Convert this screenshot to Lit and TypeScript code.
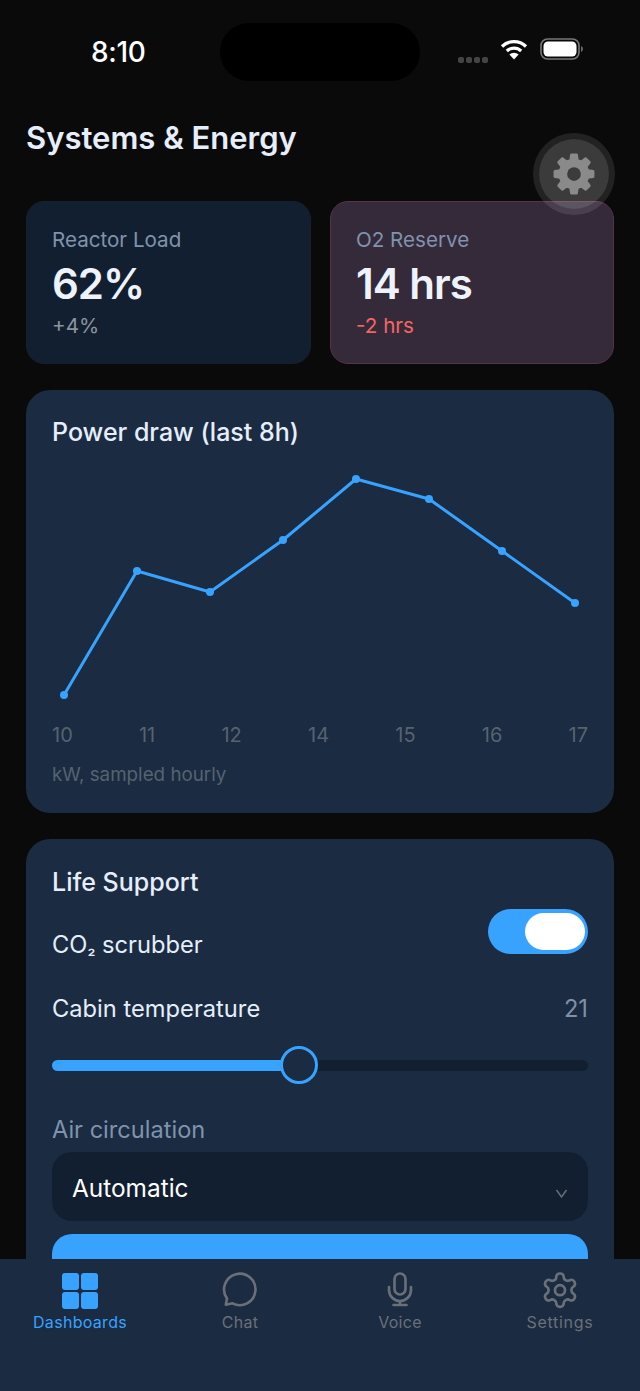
import { LitElement, html, css, svg } from "lit";
import { customElement } from "lit/decorators.js";

const POINTS: [number, number][] = [
  [12, 231], [85, 107], [158, 128], [231, 76], [304, 15], [377, 35], [450, 87], [523, 139],
];
const HOURS = ["10", "11", "12", "14", "15", "16", "17"];

function filledGear(): string {
  // eight rounded teeth around a centre of 24,24
  const teeth = 8;
  const outer = 21;
  const inner = 15.5;
  let d = "";
  for (let i = 0; i < teeth; i++) {
    const a = (i * 2 * Math.PI) / teeth - Math.PI / 2;
    const step = (2 * Math.PI) / teeth;
    const pts = [
      [inner, a - step * 0.3],
      [outer, a - step * 0.17],
      [outer, a + step * 0.17],
      [inner, a + step * 0.3],
    ];
    for (const [r, t] of pts) {
      const x = 24 + r * Math.cos(t);
      const y = 24 + r * Math.sin(t);
      d += `${d ? "L" : "M"}${x.toFixed(2)} ${y.toFixed(2)}`;
    }
  }
  return d + "Z";
}

@customElement("app-root")
export class AppRoot extends LitElement {
  static styles = css`
    :host {
      display: block;
      font-family: Inter, "Noto Sans", sans-serif;
    }
    * { box-sizing: border-box; }
    .screen {
      position: relative;
      width: 640px;
      height: 1391px;
      overflow: hidden;
      background: #0a0a0a;
      color: #e6eefb;
    }
    .status {
      height: 120px;
      padding: 23px 57px 0 91px;
      display: flex;
      align-items: flex-start;
    }
    .time {
      width: 129px;
      font-size: 28px;
      line-height: 58px;
      font-weight: 500;
      letter-spacing: -0.3px;
      color: #fff;
    }
    .island {
      width: 200px;
      height: 58px;
      border-radius: 29px;
      background: #000;
    }
    .status-icons {
      flex: 1;
      height: 58px;
      display: flex;
      justify-content: flex-end;
      align-items: center;
      gap: 12px;
    }
    .dots { display: flex; gap: 2px; margin-top: 15px; }
    .dots i { width: 6px; height: 6px; border-radius: 2px; background: #444; }
    .battery { display: block; }
    main { padding: 0 26px; }
    h1 {
      margin: 0 0 45px;
      font-size: 31px;
      line-height: 36px;
      font-weight: 600;
    }
    .stats {
      display: grid;
      grid-template-columns: 285px 284px;
      justify-content: space-between;
      margin-bottom: 26px;
    }
    .stat {
      height: 163px;
      padding: 25px;
      border-radius: 18px;
      background: #121f30;
      border: 1px solid #15202e;
    }
    .stat.warn { background: #352a3a; border-color: #5a3342; }
    .stat-label { font-size: 20.6px; line-height: 26px; color: #7f93ad; }
    .stat-value { margin-top: 6px; font-size: 42px; line-height: 50px; font-weight: 600; letter-spacing: -1px; color: #eef3fb; }
    .stat-delta { margin-top: 5px; font-size: 20.6px; line-height: 24px; color: #8d939b; }
    .warn .stat-delta { color: #f56565; }
    .card {
      background: #1a2b42;
      border-radius: 24px;
      padding: 26px;
    }
    .chart-card { height: 423px; margin-bottom: 26px; }
    h2 { margin: 0; font-size: 25px; line-height: 32px; font-weight: 500; color: #e6eefb; }
    .plot { display: block; margin-top: 16px; width: 536px; height: 250px; }
    .hours {
      display: flex;
      justify-content: space-between;
      margin-top: 7px;
      font-size: 20px;
      line-height: 28px;
      color: #56636f;
    }
    .caption { margin-top: 13px; font-size: 18.8px; line-height: 26px; color: #56636f; }
    .life { height: 560px; padding-top: 27px; }
    .row { display: flex; justify-content: space-between; align-items: center; }
    .scrub { height: 55px; margin-top: 9px; font-size: 23.7px; line-height: 30px; color: #e6eefb; align-items: flex-end; }
    .scrub .sub { font-size: 18px; }
    .toggle {
      align-self: flex-start;
      margin-top: 2px;
      width: 100px;
      height: 45px;
      border-radius: 23px;
      background: #38a3ff;
      padding: 4px 3px;
      display: flex;
      justify-content: flex-end;
    }
    .knob { width: 60px; height: 37px; border-radius: 19px; background: #fff; }
    .cabin { margin-top: 31px; font-size: 23.7px; line-height: 32px; color: #e6eefb; }
    .cabin b { font-weight: 400; color: #7f90a8; }
    .slider {
      position: relative;
      height: 11px;
      margin-top: 35px;
      border-radius: 6px;
      background: #121f30;
    }
    .fill { height: 11px; border-radius: 6px; background: #38a3ff; }
    .thumb {
      position: absolute;
      top: -14px;
      width: 38px;
      height: 38px;
      margin-left: -19px;
      border-radius: 50%;
      background: #1a2b42;
      border: 3.5px solid #38a3ff;
    }
    .air { margin-top: 43px; font-size: 23.6px; line-height: 32px; color: #7f93ad; }
    .select {
      margin-top: 6px;
      height: 69px;
      padding: 2px 20px 0;
      border-radius: 20px;
      background: #121f30;
      font-size: 24.4px;
      color: #fff;
    }
    .chev { margin-top: 12px; }
    .primary {
      height: 60px;
      margin-top: 13px;
      border-radius: 20px;
      background: #38a3ff;
    }
    .fab {
      position: absolute;
      left: 533px;
      top: 133px;
      width: 82px;
      height: 82px;
      border-radius: 50%;
      background: rgba(255, 255, 255, 0.2);
      background-clip: padding-box;
      border: 6px solid rgba(255, 255, 255, 0.1);
      display: flex;
      align-items: center;
      justify-content: center;
    }
    nav {
      position: absolute;
      left: 0;
      right: 0;
      bottom: 0;
      height: 132px;
      background: #1a2b42;
      display: grid;
      grid-template-columns: repeat(4, 160px);
      padding-top: 12px;
    }
    .tab {
      display: flex;
      flex-direction: column;
      align-items: center;
      color: #6b7078;
      font-size: 16px;
      line-height: 22px;
      letter-spacing: 0.3px;
    }
    .tab svg { display: block; width: 40px; height: 40px; }
    .tab.on { color: #38a3ff; }
    .tiles {
      width: 40px;
      height: 40px;
      display: grid;
      grid-template-columns: 17px 17px;
      grid-auto-rows: 17px;
      gap: 2px;
      justify-content: center;
      align-content: center;
    }
    .tiles i { border-radius: 3px; background: #38a3ff; }
    .tab.set { letter-spacing: 0.7px; }
  `;

  private wifi() {
    return html`<svg width="28" height="22" viewBox="0 0 28 22" fill="none" stroke="#fff" stroke-width="3.2" style="margin-top:-6px">
      <path d="M2 8.5a17 17 0 0 1 24 0" />
      <path d="M6.8 13a10.4 10.4 0 0 1 14.4 0" />
      <path d="M14 21.5l-4.6-4.9a6.4 6.4 0 0 1 9.2 0z" fill="#fff" stroke="none" />
    </svg>`;
  }

  private battery() {
    return html`<svg class="battery" width="43" height="22" viewBox="0 0 43 22" style="margin-top:-6px">
      <rect x="1" y="1" width="38" height="20" rx="6.5" fill="none" stroke="#777" stroke-width="1.6" />
      <rect x="3.5" y="3.5" width="33" height="15" rx="4.5" fill="#fff" />
      <path d="M41 8v6c1.2-.4 2-1.6 2-3s-.8-2.600-2-3z" fill="#666" />
    </svg>`;
  }

  private chart() {
    const line = POINTS.map(([x, y]) => `${x},${y}`).join(" ");
    return html`<svg class="plot" viewBox="0 0 536 250">
      <polyline points=${line} fill="none" stroke="#38a3ff" stroke-width="3" stroke-linejoin="round" />
      ${POINTS.map(([x, y]) => svg`<circle cx=${x} cy=${y} r="4" fill="#38a3ff" />`)}
    </svg>`;
  }

  render() {
    return html`<div class="screen">
      <div class="status">
        <div class="time">8:10</div>
        <div class="island"></div>
        <div class="status-icons">
          <div class="dots"><i></i><i></i><i></i><i></i></div>
          ${this.wifi()} ${this.battery()}
        </div>
      </div>
      <main>
        <h1>Systems &amp; Energy</h1>
        <div class="stats">
          <div class="stat">
            <div class="stat-label">Reactor Load</div>
            <div class="stat-value">62%</div>
            <div class="stat-delta">+4%</div>
          </div>
          <div class="stat warn">
            <div class="stat-label">O2 Reserve</div>
            <div class="stat-value">14 hrs</div>
            <div class="stat-delta">-2 hrs</div>
          </div>
        </div>
        <section class="card chart-card">
          <h2>Power draw (last 8h)</h2>
          ${this.chart()}
          <div class="hours">${HOURS.map((h) => html`<span>${h}</span>`)}</div>
          <div class="caption">kW, sampled hourly</div>
        </section>
        <section class="card life">
          <h2>Life Support</h2>
          <div class="row scrub">
            <span>CO<span class="sub">₂</span> scrubber</span>
            <div class="toggle"><div class="knob"></div></div>
          </div>
          <div class="row cabin"><span>Cabin temperature</span><b>21</b></div>
          <div class="slider">
            <div class="fill" style="width:46%"></div>
            <div class="thumb" style="left:46%"></div>
          </div>
          <div class="air">Air circulation</div>
          <div class="row select">
            <span>Automatic</span>
            <svg class="chev" width="13" height="9" viewBox="0 0 13 9" fill="none" stroke="#6b7078" stroke-width="1.4"><path d="M1.500 1l5 7 5-7" /></svg>
          </div>
          <div class="primary"></div>
        </section>
      </main>
      <div class="fab">
        <svg width="44" height="44" viewBox="0 0 48 48">
          <path d=${filledGear()} fill="#8a8a8a" stroke="#8a8a8a" stroke-width="3" stroke-linejoin="round" />
          <circle cx="24" cy="24" r="7.500" fill="#3c3c3c" />
        </svg>
      </div>
      <nav>
        <div class="tab on">
          <div class="tiles"><i></i><i></i><i></i><i></i></div>
          Dashboards
        </div>
        <div class="tab">
          <svg viewBox="0 0 40 40" fill="none" stroke="currentColor" stroke-width="2.600" stroke-linejoin="round" stroke-linecap="round">
            <path d="M5.800 33.800L7 27.500A15.700 15.700 0 1 1 12.500 32.300Z" />
          </svg>
          Chat
        </div>
        <div class="tab">
          <svg viewBox="0 0 40 40" fill="none" stroke="currentColor" stroke-width="2.600" stroke-linecap="round">
            <rect x="14.500" y="2.500" width="11" height="21" rx="5.500" />
            <path d="M9 16v3a11 11 0 0 0 22 0v-3M20 30v4M13.500 34h13" />
          </svg>
          Voice
        </div>
        <div class="tab set">
          <svg viewBox="0 0.500 24 24" fill="none" stroke="currentColor" stroke-width="1.600" stroke-linecap="round" stroke-linejoin="round">
            <path d="M12.220 2h-.44a2 2 0 0 0-2 2v.18a2 2 0 0 1-1 1.730l-.43.250a2 2 0 0 1-2 0l-.15-.08a2 2 0 0 0-2.730.730l-.22.380a2 2 0 0 0 .73 2.730l.15.100a2 2 0 0 1 1 1.720v.510a2 2 0 0 1-1 1.740l-.15.090a2 2 0 0 0-.73 2.730l.22.380a2 2 0 0 0 2.730.730l.15-.08a2 2 0 0 1 2 0l.43.250a2 2 0 0 1 1 1.730V20a2 2 0 0 0 2 2h.44a2 2 0 0 0 2-2v-.18a2 2 0 0 1 1-1.730l.43-.25a2 2 0 0 1 2 0l.15.080a2 2 0 0 0 2.730-.73l.22-.390a2 2 0 0 0-.73-2.730l-.15-.08a2 2 0 0 1-1-1.740v-.5a2 2 0 0 1 1-1.740l.15-.09a2 2 0 0 0 .73-2.730l-.22-.38a2 2 0 0 0-2.730-.73l-.15.080a2 2 0 0 1-2 0l-.43-.25a2 2 0 0 1-1-1.730V4a2 2 0 0 0-2-2z" />
            <circle cx="12" cy="12" r="3" />
          </svg>
          Settings
        </div>
      </nav>
    </div>`;
  }
}
